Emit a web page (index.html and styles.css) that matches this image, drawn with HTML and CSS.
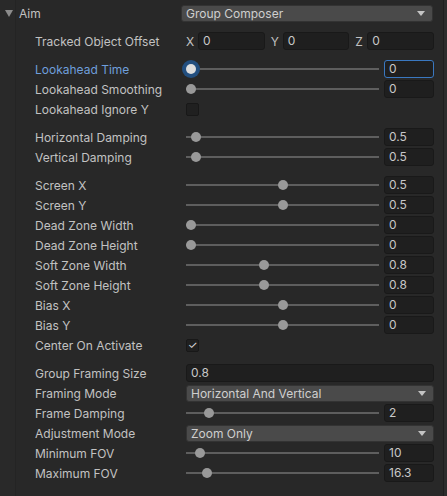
FILE: index.html
```html
<!DOCTYPE html>
<html>
<head>
<meta charset="utf-8">
<link rel="stylesheet" href="styles.css">
</head>
<body>
<div class="panel">
  <div class="gutter"></div>
  <div class="content">
    <div class="header">
      <span class="fold"></span>
      <span class="title">Aim</span>
      <div class="dropdown head-dd"><span>Group Composer</span><span class="arrow"></span></div>
    </div>

    <div class="group">
      <div class="row">
        <span class="label">Tracked Object Offset</span>
        <div class="vec3">
          <div class="axis"><span class="ax">X</span><div class="field">0</div></div>
          <div class="axis"><span class="ax">Y</span><div class="field">0</div></div>
          <div class="axis"><span class="ax">Z</span><div class="field">0</div></div>
        </div>
      </div>
    </div>

    <div class="group">
      <div class="row">
        <span class="label focus">Lookahead Time</span>
        <div class="slider-ctl"><div class="slider"><span class="thumb active" style="--p:0"></span></div><div class="field num focused">0</div></div>
      </div>
      <div class="row">
        <span class="label">Lookahead Smoothing</span>
        <div class="slider-ctl"><div class="slider"><span class="thumb" style="--p:0"></span></div><div class="field num">0</div></div>
      </div>
      <div class="row">
        <span class="label">Lookahead Ignore Y</span>
        <div class="ctl"><span class="check"></span></div>
      </div>
    </div>

    <div class="group">
      <div class="row">
        <span class="label">Horizontal Damping</span>
        <div class="slider-ctl"><div class="slider"><span class="thumb" style="--p:0.025"></span></div><div class="field num">0.5</div></div>
      </div>
      <div class="row">
        <span class="label">Vertical Damping</span>
        <div class="slider-ctl"><div class="slider"><span class="thumb" style="--p:0.025"></span></div><div class="field num">0.5</div></div>
      </div>
    </div>

    <div class="group">
      <div class="row">
        <span class="label">Screen X</span>
        <div class="slider-ctl"><div class="slider"><span class="thumb" style="--p:0.5"></span></div><div class="field num">0.5</div></div>
      </div>
      <div class="row">
        <span class="label">Screen Y</span>
        <div class="slider-ctl"><div class="slider"><span class="thumb" style="--p:0.5"></span></div><div class="field num">0.5</div></div>
      </div>
      <div class="row">
        <span class="label">Dead Zone Width</span>
        <div class="slider-ctl"><div class="slider"><span class="thumb" style="--p:0"></span></div><div class="field num">0</div></div>
      </div>
      <div class="row">
        <span class="label">Dead Zone Height</span>
        <div class="slider-ctl"><div class="slider"><span class="thumb" style="--p:0"></span></div><div class="field num">0</div></div>
      </div>
      <div class="row">
        <span class="label">Soft Zone Width</span>
        <div class="slider-ctl"><div class="slider"><span class="thumb" style="--p:0.4"></span></div><div class="field num">0.8</div></div>
      </div>
      <div class="row">
        <span class="label">Soft Zone Height</span>
        <div class="slider-ctl"><div class="slider"><span class="thumb" style="--p:0.4"></span></div><div class="field num">0.8</div></div>
      </div>
      <div class="row">
        <span class="label">Bias X</span>
        <div class="slider-ctl"><div class="slider"><span class="thumb" style="--p:0.5"></span></div><div class="field num">0</div></div>
      </div>
      <div class="row">
        <span class="label">Bias Y</span>
        <div class="slider-ctl"><div class="slider"><span class="thumb" style="--p:0.5"></span></div><div class="field num">0</div></div>
      </div>
      <div class="row">
        <span class="label">Center On Activate</span>
        <div class="ctl"><span class="check checked">&#10003;</span></div>
      </div>
    </div>

    <div class="group">
      <div class="row">
        <span class="label">Group Framing Size</span>
        <div class="ctl"><div class="field wide">0.8</div></div>
      </div>
      <div class="row">
        <span class="label">Framing Mode</span>
        <div class="ctl"><div class="dropdown"><span>Horizontal And Vertical</span><span class="arrow"></span></div></div>
      </div>
      <div class="row">
        <span class="label">Frame Damping</span>
        <div class="slider-ctl"><div class="slider"><span class="thumb" style="--p:0.1"></span></div><div class="field num">2</div></div>
      </div>
      <div class="row">
        <span class="label">Adjustment Mode</span>
        <div class="ctl"><div class="dropdown"><span>Zoom Only</span><span class="arrow"></span></div></div>
      </div>
      <div class="row">
        <span class="label">Minimum FOV</span>
        <div class="slider-ctl"><div class="slider"><span class="thumb" style="--p:0.05"></span></div><div class="field num">10</div></div>
      </div>
      <div class="row">
        <span class="label">Maximum FOV</span>
        <div class="slider-ctl"><div class="slider"><span class="thumb" style="--p:0.088"></span></div><div class="field num">16.3</div></div>
      </div>
    </div>
  </div>
  <div class="edge"></div>
</div>
</body>
</html>
```

FILE: styles.css
```css
html, body {
  margin: 0;
  padding: 0;
  background: #282828;
}
body {
  font-family: Inter, "Noto Sans", sans-serif;
  font-size: 12px;
  color: #c2c2c2;
}
.panel {
  display: flex;
  width: 447px;
  height: 496px;
  overflow: hidden;
}
.gutter {
  width: 16px;
  flex: 0 0 16px;
  border-right: 1px solid #242424;
  box-sizing: border-box;
  background: #292929;
}
.content {
  flex: 1;
  display: flex;
  flex-direction: column;
  padding-right: 9px;
}
.edge {
  width: 4px;
  flex: 0 0 4px;
  border-left: 1px solid #1f1f1f;
  box-sizing: border-box;
  background: #2d2d2d;
}
.header {
  height: 26px;
  display: flex;
  align-items: center;
  margin-left: -16px;
  margin-bottom: 5px;
}
.fold {
  width: 0;
  height: 0;
  border-left: 4.5px solid transparent;
  border-right: 4.5px solid transparent;
  border-top: 7px solid #8c8c8c;
  margin-left: 5px;
  margin-right: 6px;
}
.title {
  width: 162px;
}
.head-dd {
  flex: 1;
  margin-right: 1px;
}
.group {
  display: flex;
  flex-direction: column;
  margin-bottom: 8px;
  padding-left: 19px;
}
.row {
  height: 20px;
  display: flex;
  align-items: center;
}
.label {
  width: 151px;
  flex: 0 0 151px;
  white-space: nowrap;
}
.label.focus {
  color: #6f9fdc;
}
.ctl, .slider-ctl, .vec3 {
  flex: 1;
  display: flex;
  align-items: center;
}
.slider-ctl {
  gap: 5px;
}
.slider {
  flex: 1;
  height: 20px;
  position: relative;
}
.slider::before {
  content: "";
  position: absolute;
  left: 0;
  right: 0;
  top: 9px;
  height: 2px;
  background: #5e5e5e;
}
.thumb {
  position: absolute;
  top: 5px;
  left: calc(var(--p) * (100% - 10px));
  width: 10px;
  height: 10px;
  border-radius: 50%;
  background: #999999;
}
.thumb.active {
  background: #dedede;
  box-shadow: 0 0 0 4px #234f7f;
}
.field {
  height: 18px;
  box-sizing: border-box;
  background: #1f1f1f;
  border: 1px solid #191919;
  border-radius: 3px;
  padding-left: 4px;
  line-height: 16px;
  color: #c8c8c8;
}
.field.num {
  width: 50px;
  flex: 0 0 50px;
}
.field.focused {
  border-color: #3a78c0;
}
.field.wide {
  flex: 1;
}
.vec3 {
  gap: 6px;
}
.axis {
  flex: 1;
  display: flex;
  align-items: center;
}
.ax {
  width: 12px;
  flex: 0 0 12px;
}
.axis .field {
  flex: 1;
}
.dropdown {
  flex: 1;
  height: 17px;
  box-sizing: border-box;
  background: #4a4a4a;
  border: 1px solid #333333;
  border-radius: 3px;
  display: flex;
  align-items: center;
  justify-content: space-between;
  padding: 0 7px 0 4px;
  color: #cfcfcf;
}
.arrow {
  width: 0;
  height: 0;
  border-left: 4.5px solid transparent;
  border-right: 4.5px solid transparent;
  border-top: 5px solid #c4c4c4;
}
.check {
  width: 13px;
  height: 13px;
  box-sizing: border-box;
  background: #202020;
  border: 1px solid #181818;
  border-radius: 2px;
  display: flex;
  align-items: center;
  justify-content: center;
  font-size: 11px;
  color: #dcdcdc;
  line-height: 1;
}
```
